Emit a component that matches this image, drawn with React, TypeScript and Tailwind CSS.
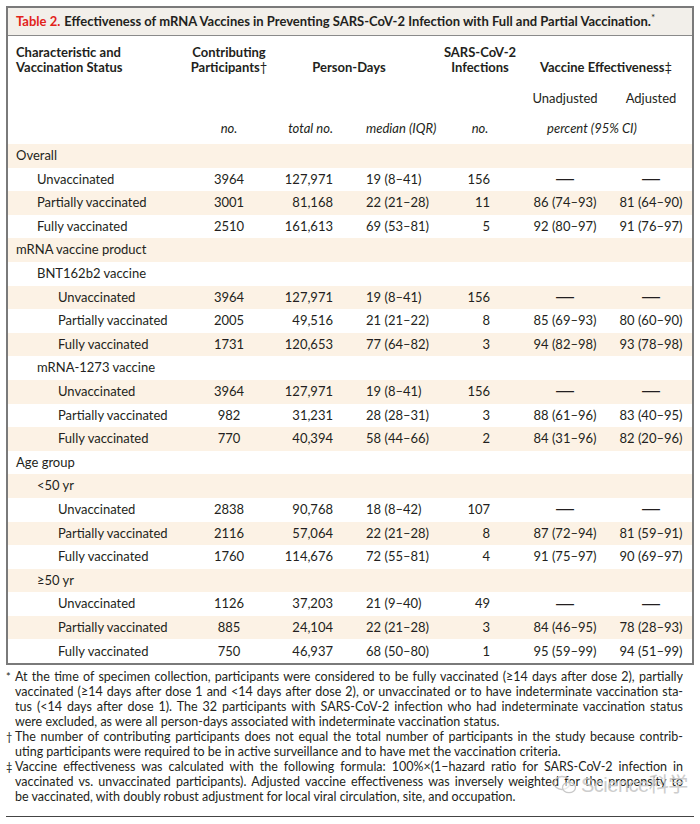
import React from "react";

type Row = {
  label: string;
  level: number;
  c?: string;
  t?: string;
  m?: string;
  i?: string;
  u?: string;
  a?: string;
};

const rows: Row[] = [
  { label: "Overall", level: 0 },
  { label: "Unvaccinated", level: 1, c: "3964", t: "127,971", m: "19 (8–41)", i: "156", u: "—", a: "—" },
  { label: "Partially vaccinated", level: 1, c: "3001", t: "81,168", m: "22 (21–28)", i: "11", u: "86 (74–93)", a: "81 (64–90)" },
  { label: "Fully vaccinated", level: 1, c: "2510", t: "161,613", m: "69 (53–81)", i: "5", u: "92 (80–97)", a: "91 (76–97)" },
  { label: "mRNA vaccine product", level: 0 },
  { label: "BNT162b2 vaccine", level: 1 },
  { label: "Unvaccinated", level: 2, c: "3964", t: "127,971", m: "19 (8–41)", i: "156", u: "—", a: "—" },
  { label: "Partially vaccinated", level: 2, c: "2005", t: "49,516", m: "21 (21–22)", i: "8", u: "85 (69–93)", a: "80 (60–90)" },
  { label: "Fully vaccinated", level: 2, c: "1731", t: "120,653", m: "77 (64–82)", i: "3", u: "94 (82–98)", a: "93 (78–98)" },
  { label: "mRNA-1273 vaccine", level: 1 },
  { label: "Unvaccinated", level: 2, c: "3964", t: "127,971", m: "19 (8–41)", i: "156", u: "—", a: "—" },
  { label: "Partially vaccinated", level: 2, c: "982", t: "31,231", m: "28 (28–31)", i: "3", u: "88 (61–96)", a: "83 (40–95)" },
  { label: "Fully vaccinated", level: 2, c: "770", t: "40,394", m: "58 (44–66)", i: "2", u: "84 (31–96)", a: "82 (20–96)" },
  { label: "Age group", level: 0 },
  { label: "<50 yr", level: 1 },
  { label: "Unvaccinated", level: 2, c: "2838", t: "90,768", m: "18 (8–42)", i: "107", u: "—", a: "—" },
  { label: "Partially vaccinated", level: 2, c: "2116", t: "57,064", m: "22 (21–28)", i: "8", u: "87 (72–94)", a: "81 (59–91)" },
  { label: "Fully vaccinated", level: 2, c: "1760", t: "114,676", m: "72 (55–81)", i: "4", u: "91 (75–97)", a: "90 (69–97)" },
  { label: "≥50 yr", level: 1 },
  { label: "Unvaccinated", level: 2, c: "1126", t: "37,203", m: "21 (9–40)", i: "49", u: "—", a: "—" },
  { label: "Partially vaccinated", level: 2, c: "885", t: "24,104", m: "22 (21–28)", i: "3", u: "84 (46–95)", a: "78 (28–93)" },
  { label: "Fully vaccinated", level: 2, c: "750", t: "46,937", m: "68 (50–80)", i: "1", u: "95 (59–99)", a: "94 (51–99)" },
];

const grid = "grid grid-cols-[182px_78px_72px_100px_80px_90px_82px]";

function Val({ v }: { v?: string }) {
  if (v === "—")
    return (
      <span className="text-[18px] leading-none" style={{ fontFamily: "'Liberation Sans', sans-serif" }}>
        —
      </span>
    );
  return <>{v}</>;
}

function Line({ text, last }: { text: string; last?: boolean }) {
  return (
    <div className={last ? "whitespace-nowrap" : "text-justify [text-align-last:justify] whitespace-nowrap"}>
      {text}
    </div>
  );
}

function Note({ mark, lines }: { mark: string; lines: string[] }) {
  return (
    <div className="flex">
      <div className="w-[9px] shrink-0 text-[11px]">{mark}</div>
      <div className="w-[668px]">
        {lines.map((l, idx) => (
          <Line key={idx} text={l} last={idx === lines.length - 1} />
        ))}
      </div>
    </div>
  );
}

export default function App() {
  return (
    <div
      className="relative w-[700px] h-[824px] bg-white text-[#231f20] overflow-hidden"
      style={{ fontFamily: "Lato, 'Noto Sans CJK SC', sans-serif" }}
    >
      <div className="pt-[6px] px-[6px]">
        <div className="border-2 border-[#7a7a7a]">
          <div className="h-[28px] bg-[#f2efea] border-b border-[#8a8a8a] flex items-center pl-[8px] text-[13px] font-bold whitespace-nowrap">
            <span className="text-[#e2231a]">Table 2.</span>
            <span className="ml-[4px]">
              Effectiveness of mRNA Vaccines in Preventing SARS-CoV-2 Infection with Full and Partial Vaccination.
              <sup className="text-[10px] font-normal">*</sup>
            </span>
          </div>
          {/* header */}
          <div className="text-[13px] leading-[15px]">
            <div className={`${grid} pt-[9px] font-bold`}>
              <div className="pl-[8px]">
                Characteristic and
                <br />
                Vaccination Status
              </div>
              <div className="text-center">
                Contributing
                <br />
                Participants<span className="font-normal">†</span>
              </div>
              <div className="col-span-2 flex items-end justify-center pr-[10px]">Person-Days</div>
              <div className="text-center">
                SARS-CoV-2
                <br />
                Infections
              </div>
              <div className="col-span-2 flex items-end justify-center">
                Vaccine Effectiveness<span className="font-normal">‡</span>
              </div>
            </div>
            <div className={`${grid} mt-[15px] leading-[16px]`}>
              <div className="col-span-5" />
              <div className="text-center">Unadjusted</div>
              <div className="text-center">Adjusted</div>
            </div>
            <div className={`${grid} mt-[14px] pb-[8px] leading-[16px] italic`}>
              <div />
              <div className="text-center">no.</div>
              <div className="text-right pr-[7px]">total no.</div>
              <div className="pl-[26px]">median (IQR)</div>
              <div className="text-center">no.</div>
              <div className="col-span-2 text-center pr-[28px]">percent (95% CI)</div>
            </div>
          </div>
          {/* body */}
          <div className="text-[13px]">
            {rows.map((r, idx) => (
              <div
                key={idx}
                className={`${grid} h-[23.6px] items-center ${idx % 2 === 0 ? "bg-[#fcf2e5]" : "bg-white"}`}
              >
                <div
                  className={
                    r.level === 0 ? "pl-[8px]" : r.level === 1 ? "pl-[29px]" : "pl-[50px]"
                  }
                >
                  {r.label}
                </div>
                <div className="text-center">{r.c}</div>
                <div className="text-right pr-[7px]">{r.t}</div>
                <div className="pl-[26px]">{r.m}</div>
                <div className="text-right pr-[30px]">{r.i}</div>
                <div className="text-center">
                  <Val v={r.u} />
                </div>
                <div className="text-center">
                  <Val v={r.a} />
                </div>
              </div>
            ))}
          </div>
        </div>
        {/* footnotes */}
        <div className="mt-[4px] text-[12.5px] leading-[15px]">
          <Note
            mark="*"
            lines={[
              "At the time of specimen collection, participants were considered to be fully vaccinated (≥14 days after dose 2), partially",
              "vaccinated (≥14 days after dose 1 and <14 days after dose 2), or unvaccinated or to have indeterminate vaccination sta-",
              "tus (<14 days after dose 1). The 32 participants with SARS-CoV-2 infection who had indeterminate vaccination status",
              "were excluded, as were all person-days associated with indeterminate vaccination status.",
            ]}
          />
          <Note
            mark="†"
            lines={[
              "The number of contributing participants does not equal the total number of participants in the study because contrib-",
              "uting participants were required to be in active surveillance and to have met the vaccination criteria.",
            ]}
          />
          <Note
            mark="‡"
            lines={[
              "Vaccine effectiveness was calculated with the following formula: 100%×(1−hazard ratio for SARS-CoV-2 infection in",
              "vaccinated vs. unvaccinated participants). Adjusted vaccine effectiveness was inversely weighted for the propensity to",
              "be vaccinated, with doubly robust adjustment for local viral circulation, site, and occupation.",
            ]}
          />
        </div>
        <div className="mt-[12px] h-px bg-[#444]" />
      </div>
      {/* watermark */}
      <div className="absolute left-[553px] top-[775px] flex items-center gap-[4px] text-[#c8c8c8] opacity-90">
        <svg width="24" height="20" viewBox="0 0 24 20" fill="none" stroke="#c4c4c4" strokeWidth="1.3">
          <ellipse cx="9" cy="8" rx="8" ry="6.5" />
          <ellipse cx="16" cy="12.5" rx="6.5" ry="5.2" fill="white" fillOpacity="0.6" />
        </svg>
        <span className="text-[20px] leading-none tracking-tight" style={{ fontFamily: "'Liberation Sans', 'Noto Sans CJK SC', sans-serif" }}>
          Science科学
        </span>
      </div>
    </div>
  );
}
